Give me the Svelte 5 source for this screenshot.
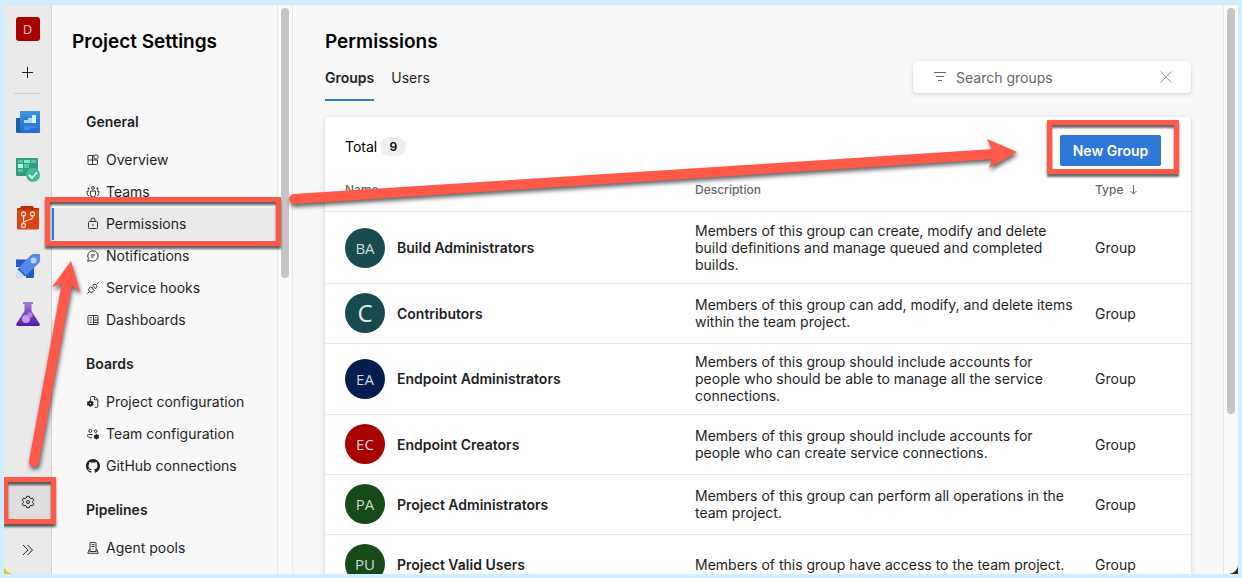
<script>
  const icons = {
    overview: [
      { d: 'M2 2.500h4.500v9H3a1 1 0 0 1-1-1zM2 7h9.500v3.500a1 1 0 0 1-1 1h-4M6.500 2.500h1.500' },
      { d: 'M10 1.800a2.200 2.200 0 1 1 0 4.400a2.200 2.200 0 0 1 0-4.400z' },
    ],
    teams: [
      { d: 'M7 1.600a1.400 1.400 0 1 1 0 2.800a1.400 1.400 0 0 1 0-2.800zM4.500 6h5v3.600a2.500 2.500 0 0 1-5 0zM3 6H1.200v2.600a2 2 0 0 0 1.800 2M11 6h1.800v2.600a2 2 0 0 1-1.800 2' },
      { d: 'M2.600 2.400a1 1 0 1 1 0 2a1 1 0 0 1 0-2zM11.400 2.400a1 1 0 1 1 0 2a1 1 0 0 1 0-2z', solid: true },
    ],
    lock: [
      { d: 'M3.500 4.500h7a1 1 0 0 1 1 1v5a1 1 0 0 1-1 1h-7a1 1 0 0 1-1-1v-5a1 1 0 0 1 1-1zM5 4.500V3a2 2 0 0 1 4 0v1.500' },
      { d: 'M7 7.200a.8.8 0 1 1 0 1.600a.8.8 0 0 1 0-1.600z', solid: true },
    ],
    chat: [{ d: 'M7 1.800a5.200 5.200 0 1 1-2.500 9.800L1.700 12.300l.7-2.700A5.200 5.200 0 0 1 7 1.800zM5 6h4M5 8h2.600' }],
    plug: [
      { d: 'M1.300 12.700l2-2M10.700 3.300l2-2M4.600 5.800l3.600 3.600l-1.200 1.200a2.500 2.500 0 0 1-3.600-3.600zM6.700 4.300L7.400 3.500a2.400 2.400 0 0 1 3.200 3.200l-.9.900zM5.800 7l1-1M7.300 8.400l1-1' },
    ],
    dashboard: [{ d: 'M3 2.500h8a1 1 0 0 1 1 1v7a1 1 0 0 1-1 1H3a1 1 0 0 1-1-1v-7a1 1 0 0 1 1-1zM7.500 2.500v9M7.500 7H12M7.500 9.500H12M3.700 4.600h2M3.700 7h2M3.700 9.300h2M9 4.600h1.500' }],
    fileGear: [
      { d: 'M4.500 5V2.500a1 1 0 0 1 1-1h3.300l3 3v6.800a1 1 0 0 1-1 1H8.500M8.500 1.800v3h3' },
      { d: 'M4.300 5.200l1 .2.500 1 1.100-.1.800 1.200-.6 1 .6 1-.8 1.200-1.100-.1-.5 1-1 .2-1-.2-.5-1-1.100.1-.8-1.200.6-1-.6-1 .8-1.200 1.100.1.500-1zM4.300 7.800a.7.7 0 1 0 0 1.400a.7.7 0 0 0 0-1.400z', solid: true },
    ],
    peopleGear: [
      { d: 'M4.300 2.400a1.500 1.500 0 1 1 0 3a1.500 1.500 0 0 1 0-3zM9.700 2.900a1.300 1.300 0 1 1 0 2.600a1.300 1.300 0 0 1 0-2.600zM6.700 7.500H2.300a.8.800 0 0 0-.8.800c0 1.600 1.200 2.600 4.500 2.500' },
      { d: 'M10.500 7l.8.300.4.600.9.100.5 1-.5.700.5.800-.5 1-.9.100-.4.700-.8.200-.8-.2-.4-.7-.9-.1-.5-1 .5-.8-.5-.7.500-1 .9-.1.400-.6z', solid: true },
    ],
    server: [{ d: 'M4 10V2.300a.8.800 0 0 1 .8-.8h4.400a.8.800 0 0 1 .8.800V10M5.500 3.700h3M5.500 5.500h3M6.500 8h1M4 8.700H3L1.800 12.300h10.400L11 8.700h-1M3.500 10.500h7' }],
  };

  const sections = [
    {
      title: 'General',
      items: [
        ['Overview', 'overview'],
        ['Teams', 'teams'],
        ['Permissions', 'lock'],
        ['Notifications', 'chat'],
        ['Service hooks', 'plug'],
        ['Dashboards', 'dashboard'],
      ],
    },
    {
      title: 'Boards',
      items: [
        ['Project configuration', 'fileGear'],
        ['Team configuration', 'peopleGear'],
        ['GitHub connections', 'github'],
      ],
    },
    { title: 'Pipelines', items: [['Agent pools', 'server']] },
  ];

  const groups = [
    { initials: 'BA', color: '#174b50', name: 'Build Administrators', text: 'Members of this group can create, modify and delete build definitions and manage queued and completed builds.' },
    { initials: 'C', color: '#174b50', name: 'Contributors', text: 'Members of this group can add, modify, and delete items within the team project.' },
    { initials: 'EA', color: '#041d4f', name: 'Endpoint Administrators', text: 'Members of this group should include accounts for people who should be able to manage all the service connections.' },
    { initials: 'EC', color: '#a90000', name: 'Endpoint Creators', text: 'Members of this group should include accounts for people who can create service connections.' },
    { initials: 'PA', color: '#154a19', name: 'Project Administrators', text: 'Members of this group can perform all operations in the team project.' },
    { initials: 'PU', color: '#154a19', name: 'Project Valid Users', text: 'Members of this group have access to the team project.' },
  ];

  let search = $state('');
</script>

<div class="desktop">
  <div class="window">
    <nav class="rail" aria-label="Services">
      <a class="cell" href="#project" aria-label="Project"><span class="project">D</span></a>
      <button class="cell add" aria-label="Add">
        <svg width="12" height="12" viewBox="0 0 12 12" fill="none" stroke="#222"><path d="M5.500 0v11M0 5.500h11" /></svg>
      </button>
      <hr />
      <a class="cell" href="#boards" aria-label="Overview">
        <svg width="24" height="24" viewBox="0 0 24 24">
          <defs>
            <linearGradient id="blue" x2="0" y2="1"><stop stop-color="#3b97e3" /><stop offset="1" stop-color="#2768cf" /></linearGradient>
          </defs>
          <path fill="#1c5fa5" d="M0 8h5v15H1.500A1.500 1.500 0 0 1 0 21.500z" />
          <path fill="url(#blue)" d="M4 1h19a1 1 0 0 1 1 1v20a1 1 0 0 1-1 1H2.500Q4 22.500 4 21z" />
          <path fill="#a5dcff" d="M8 13v-3h4V8h4V5h4v8z" />
          <path fill="#dff4ff" d="M16 5h4v8h-4z" />
          <path fill="#3393e2" d="M8 16h12v2h-6v2H8z" />
        </svg>
      </a>
      <a class="cell" href="#work" aria-label="Boards">
        <svg width="24" height="24" viewBox="0 0 24 24">
          <path fill="#349b7c" d="M1 0h20a1 1 0 0 1 1 1v17H1a1 1 0 0 1-1-1V1a1 1 0 0 1 1-1z" />
          <path fill="#53c8a2" d="M2 2h5v3H2zM15 2h5v3h-5zM8 6h5v4H8zM2 11h5v3H2z" />
          <path fill="#78edcb" d="M8 2h6v3H8z" />
          <path fill="#b2fff0" d="M2 6h5v4H2z" />
          <circle cx="17" cy="17" r="7" fill="#3bbd9b" />
          <path d="M13 17l3 3l5-5.500" fill="none" stroke="#fff" stroke-width="1.800" />
        </svg>
      </a>
      <a class="cell" href="#repos" aria-label="Repos">
        <svg width="24" height="24" viewBox="0 0 24 24">
          <path fill="#b83100" d="M5 0h12l1 2h4a1 1 0 0 1 1 1v4H1V3a1 1 0 0 1 1-1h2z" />
          <path fill="#dc4513" d="M1 4h22v18.500a1 1 0 0 1-1 1H2a1 1 0 0 1-1-1z" />
          <g fill="none" stroke="#ffd3c1" stroke-width="1.300">
            <circle cx="7.500" cy="8" r="2" /><circle cx="16.500" cy="8" r="2" /><circle cx="7.500" cy="19.500" r="2" />
            <path d="M7.500 10v7.500M16.500 10v1.500Q16.500 13 14 13.500L7.500 16" />
          </g>
        </svg>
      </a>
      <a class="cell" href="#pipelines" aria-label="Pipelines">
        <svg width="24" height="24" viewBox="0 0 24 24">
          <path fill="#245ac8" d="M0 5.500h12L8 13H0zM18 12v11a1 1 0 0 1-1 1h-7v-6z" />
          <path fill="#5388ed" d="M14.500 1.500Q16 0 18 0h5a1 1 0 0 1 1 1v5q0 2-1.500 3.500L10.500 21L3 13.500z" />
          <path fill="#2c66d5" d="M3 13.500l7.500 7.500l-2 1.500l-7-7z" />
          <circle cx="17.500" cy="6.500" r="3" fill="#b7d3ff" />
          <path fill="#c5dcff" d="M1 16l3 1.500L7.500 21L8 23L5 22l-2-2zM0 18h1.500v4.500H6V24H0z" />
        </svg>
      </a>
      <a class="cell" href="#tests" aria-label="Test Plans">
        <svg width="24" height="24" viewBox="0 0 24 24">
          <defs>
            <linearGradient id="violet" x2="0" y2="1"><stop stop-color="#a779dc" /><stop offset="1" stop-color="#5219a0" /></linearGradient>
          </defs>
          <path fill="url(#violet)" d="M7 0h10v2h-1.500v7l8 12.500Q24.500 24 22 24H2Q-.5 24 .5 21.500L8.500 9V2H7z" />
          <circle cx="10" cy="17" r="4" fill="#c59af0" /><circle cx="14" cy="13" r="2.500" fill="#b27fe5" />
        </svg>
      </a>
      <a class="cell settings" href="#settings" aria-label="Project settings">
        <svg width="14" height="14" viewBox="0 0 14 14" fill="none" stroke="#222">
          <path d="M5.700 1.300h2.600l.4 1.700 1.100.6 1.700-.5 1.300 2.200-1.300 1.200v1l1.300 1.200-1.300 2.200-1.700-.5-1.100.6-.4 1.700H5.700L5.300 11l-1.100-.6-1.700.5-1.300-2.200 1.300-1.200v-1L1.200 5.300l1.300-2.200 1.700.5L5.300 3z" />
          <circle cx="7" cy="7" r="1.500" />
        </svg>
      </a>
      <button class="cell" aria-label="Expand">
        <svg width="12" height="12" viewBox="0 0 12 12" fill="none" stroke="#222"><path d="M1 1l5 5l-5 5M5.500 1l5 5l-5 5" /></svg>
      </button>
    </nav>

    <aside class="sidebar">
      <h1>Project Settings</h1>
      {#each sections as section}
        <section>
          <h2>{section.title}</h2>
          {#each section.items as [label, icon]}
            <a class="item" class:selected={label === 'Permissions'} href={'#' + icon}>
              {#if icon === 'github'}
                <svg width="14" height="14" viewBox="0 0 16 16" fill="#222" aria-hidden="true">
                  <path d="M8 0C3.580 0 0 3.580 0 8c0 3.540 2.290 6.530 5.470 7.590.4.070.55-.17.55-.38 0-.19-.01-.82-.01-1.490-2.010.37-2.530-.49-2.690-.94-.09-.23-.48-.94-.82-1.130-.28-.15-.68-.52-.01-.53.63-.01 1.080.58 1.230.82.72 1.210 1.870.87 2.330.66.07-.52.28-.87.51-1.070-1.780-.2-3.640-.89-3.640-3.950 0-.87.31-1.590.82-2.150-.08-.2-.36-1.020.08-2.120 0 0 .67-.21 2.200.82.64-.18 1.320-.27 2-.27s1.360.09 2 .27c1.530-1.040 2.200-.82 2.200-.82.44 1.100.16 1.920.08 2.120.51.56.82 1.270.82 2.150 0 3.070-1.870 3.750-3.650 3.950.29.25.54.73.54 1.480 0 1.070-.01 1.930-.01 2.200 0 .21.15.46.55.38A8.010 8.010 0 0 0 16 8c0-4.420-3.580-8-8-8z" />
                </svg>
              {:else}
                <svg width="14" height="14" viewBox="0 0 14 14" aria-hidden="true">
                  {#each icons[icon] as part}
                    <path class={part.solid ? 'solid' : 'line'} d={part.d} />
                  {/each}
                </svg>
              {/if}
              {label}
            </a>
          {/each}
        </section>
      {/each}
    </aside>
    <div class="track"><span class="thumb short"></span></div>

    <main>
      <h1>Permissions</h1>
      <div class="toolbar">
        <div class="tabs">
          <button class="tab active">Groups</button>
          <button class="tab">Users</button>
        </div>
        <label class="search">
          <svg width="12" height="10" viewBox="0 0 12 10" fill="none" stroke="#666"><path d="M0 .5h12M2 4.500h8M4 8.500h4" /></svg>
          <input type="text" aria-label="Search groups" placeholder="Search groups" bind:value={search} />
          <button class="clear" aria-label="Clear" onclick={() => (search = '')}>
            <svg width="12" height="12" viewBox="0 0 12 12" fill="none" stroke="#999"><path d="M.5.5l11 11M11.500.5l-11 11" /></svg>
          </button>
        </label>
      </div>

      <div class="card">
        <header>
          <span class="total">Total <span class="count">9</span></span>
          <button class="primary">New Group</button>
        </header>
        <table>
          <colgroup><col /><col class="wide" /><col class="narrow" /></colgroup>
          <thead>
            <tr>
              <th>Name</th>
              <th>Description</th>
              <th>
                <span class="sort">Type
                  <svg width="8" height="10" viewBox="0 0 8 10" fill="none" stroke="#666"><path d="M4.500 0v9M1.500 6l3 3l3-3" /></svg>
                </span>
              </th>
            </tr>
          </thead>
          <tbody>
            {#each groups as group}
              <tr>
                <td>
                  <div class="name">
                    <span class="avatar" class:single={group.initials.length === 1} style:background={group.color}>{group.initials}</span>
                    {group.name}
                  </div>
                </td>
                <td>{group.text}</td>
                <td>Group</td>
              </tr>
            {/each}
          </tbody>
        </table>
      </div>
    </main>
    <div class="track page"><span class="thumb long"></span></div>
  </div>

  <svg class="marks" width="1242" height="578" viewBox="0 0 1242 578" aria-hidden="true">
    <g class="frames">
      <rect x="47.500" y="199.500" width="231" height="44" />
      <rect x="5.500" y="479.500" width="48" height="42" />
      <rect x="1049.500" y="122.500" width="127" height="49" />
    </g>
    <g class="arrow">
      <path class="shaft" d="M294 199L994 154" />
      <path d="M987 139L1017 152L989 168L994 154z" />
    </g>
    <g class="arrow">
      <path class="shaft" d="M34 462L67 283" />
      <path d="M71 261L80 292L67 282L52 287z" />
    </g>
  </svg>
</div>

<style>
  :global(body) { margin: 0; }
  * { box-sizing: border-box; }
  .desktop {
    position: relative;
    height: 100vh;
    overflow: hidden;
    border: 4px solid #cfeeff;
    background: linear-gradient(90deg, #d9c73c, #33300c);
    font-family: Inter, "Liberation Sans", sans-serif;
    font-size: 14px;
    line-height: 17px;
    color: #1e1e1e;
  }
  .window {
    display: flex;
    height: 100%;
    overflow: hidden;
    border-top: 1px solid #e2e2e2;
    border-radius: 0 0 10px 10px;
    background: #f8f8f8;
  }
  button { padding: 0; border: 0; background: none; font: inherit; color: inherit; }
  a { color: inherit; text-decoration: none; }
  h1 { margin: 0; font-size: 19px; line-height: 24px; font-weight: 600; color: #000; white-space: nowrap; }

  .rail {
    display: flex;
    flex: 0 0 48px;
    flex-direction: column;
    border-right: 1px solid #d2d2d2;
    background: #eaeaea;
  }
  .cell { display: flex; flex: 0 0 48px; align-items: center; justify-content: center; }
  .cell.add { flex-basis: 40px; }
  .rail hr { width: 27px; margin: 0 auto 4px; border: 0; border-top: 1px solid #cfcfcf; }
  .project {
    width: 24px;
    border-radius: 3px;
    background: #a90000;
    color: #e9c4c4;
    font: 13px/24px "Open Sans", sans-serif;
    text-align: center;
  }
  .settings { margin-top: auto; background: #dedede; }

  .sidebar { flex: 0 0 226px; overflow: hidden; padding-top: 25px; border-right: 1px solid #e6e6e6; }
  .sidebar h1 { padding: 0 20px; margin-bottom: 46px; }
  .sidebar h2 { margin: 0; padding-left: 34px; font-size: 14px; line-height: 44px; font-weight: 600; }
  section + section { margin-top: 6px; }
  .item { display: flex; align-items: center; gap: 6px; height: 32px; padding-left: 34px; line-height: 18px; white-space: nowrap; }
  .item.selected { padding-left: 32px; border-left: 2px solid #2c77d7; background: #eaeaea; }
  .line { fill: none; stroke: #333; stroke-width: 1px; }
  .solid { fill: #222; }

  .track { display: flex; flex: 0 0 15px; justify-content: center; padding-top: 3px; border-right: 1px solid #e8e8e8; background: #fafafa; }
  .track.page { border-right: 0; border-left: 1px solid #e6e6e6; }
  .thumb { width: 8px; border-radius: 4px; background: #c5c5c5; }
  .short { height: 270px; }
  .long { height: 406px; }

  main { flex: 1; min-width: 0; padding: 25px 32px 0; }
  .toolbar { display: flex; align-items: center; justify-content: space-between; height: 46px; }
  .tabs { display: flex; gap: 17px; }
  .tab { height: 48px; padding-top: 3px; border-bottom: 2px solid transparent; }
  .tab.active { border-color: #2c77d7; font-weight: 600; }
  .search {
    display: flex;
    align-items: center;
    gap: 10px;
    width: 278px;
    height: 32px;
    padding: 0 19px 0 21px;
    border-radius: 4px;
    background: #fff;
    box-shadow: 0 2px 5px #0000001f, 0 0 2px #0000000f;
  }
  .search input { flex: 1; min-width: 0; padding: 0; border: 0; outline: 0; background: none; font: inherit; }
  .search input::placeholder { color: #666; opacity: 1; }
  .clear { display: flex; }

  .card { margin-top: 17px; border-radius: 4px; background: #fff; box-shadow: 0 2px 7px #0000001f, 0 0 2px #00000014; }
  header { display: flex; align-items: center; justify-content: space-between; padding: 18px 30px 0 20px; }
  .total { display: flex; align-items: center; gap: 3px; padding-bottom: 8px; color: #000; }
  .count { width: 26px; border-radius: 10px; background: #efefef; font-size: 12px; line-height: 19px; font-weight: 600; text-align: center; }
  .primary { width: 101px; height: 31px; border-radius: 2px; background: #2c77d7; color: #fff; font-weight: 600; }

  table { width: 100%; table-layout: fixed; border-spacing: 0; }
  .wide { width: 400px; }
  .narrow { width: 96px; }
  th { height: 46px; padding: 2px 0 0; border-bottom: 1px solid #e6e6e6; color: #666; font-size: 12px; font-weight: 500; text-align: left; }
  th:first-child, td:first-child { padding-left: 20px; }
  .sort { display: flex; align-items: center; gap: 6px; }
  td { padding: 9px 20px 10px 0; border-bottom: 1px solid #e9e9e9; }
  tbody tr:first-child td { padding-top: 10px; }
  .name { display: flex; align-items: center; gap: 12px; font-weight: 600; }
  .avatar {
    width: 40px;
    border-radius: 50%;
    color: #cfdcdc;
    font: 15px/40px "Open Sans", sans-serif;
    text-align: center;
  }
  .avatar.single { color: #e4ecec; font-size: 24px; }

  .marks { position: absolute; top: -4px; left: -4px; pointer-events: none; }
  .frames { fill: none; stroke: #ff594a; stroke-width: 5px; filter: drop-shadow(0 3px 1px #0009); }
  .arrow { fill: #ff594a; filter: drop-shadow(1px 3px 2px #0009); }
  .shaft { stroke: #ff594a; stroke-width: 10px; stroke-linecap: round; }
</style>
